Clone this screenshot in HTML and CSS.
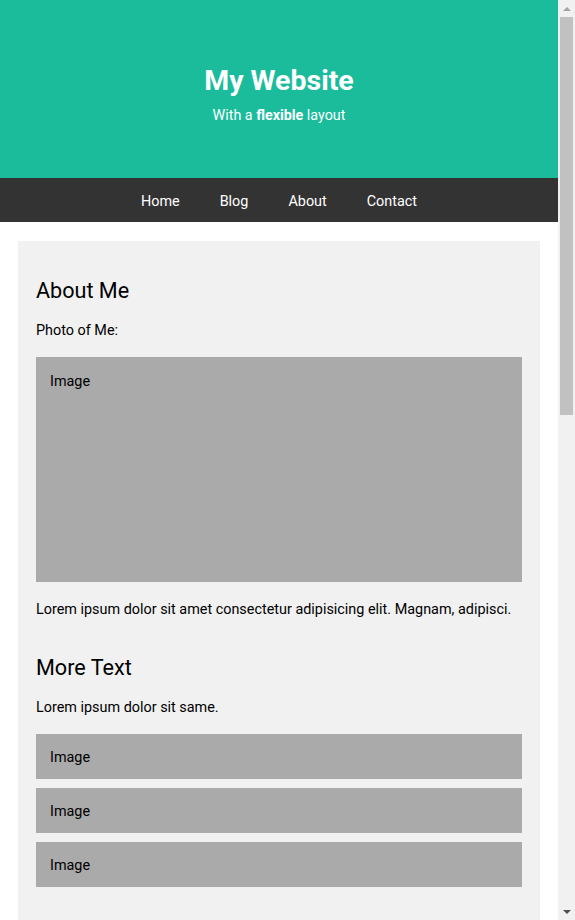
FILE: index.html
```html
<!DOCTYPE html>
<html lang="en">
<head>
<meta charset="utf-8">
<title>My Website</title>
<link rel="stylesheet" href="styles.css">
</head>
<body>
<div class="site">
  <header class="header">
    <h1 class="title">My Website</h1>
    <p class="subtitle">With a <b>flexible</b> layout</p>
  </header>
  <nav class="navbar">
    <a href="#">Home</a>
    <a href="#">Blog</a>
    <a href="#">About</a>
    <a href="#">Contact</a>
  </nav>
  <main class="page">
    <section class="card">
      <h2>About Me</h2>
      <p>Photo of Me:</p>
      <div class="fakeimg big">Image</div>
      <p>Lorem ipsum dolor sit amet consectetur adipisicing elit. Magnam, adipisci.</p>
      <h2 class="more">More Text</h2>
      <p>Lorem ipsum dolor sit same.</p>
      <div class="fakeimg">Image</div>
      <div class="fakeimg">Image</div>
      <div class="fakeimg">Image</div>
    </section>
  </main>
</div>
<div class="scrollbar" aria-hidden="true">
  <div class="sb-btn"><span class="arrow up"></span></div>
  <div class="sb-track"><div class="sb-thumb"></div></div>
  <div class="sb-btn"><span class="arrow down"></span></div>
</div>
</body>
</html>
```

FILE: styles.css
```css
* { box-sizing: border-box; }

html, body {
  margin: 0;
  height: 100%;
  overflow: hidden;
}

body {
  font-family: Roboto, "Liberation Sans", sans-serif;
  font-size: 14.4px;
  color: #000;
  background: #fff;
}

.site {
  margin-right: 17px;
}

.header {
  background: #1abc9c;
  color: #fff;
  text-align: center;
  height: 178px;
  padding-top: 63px;
}

.title {
  margin: 0;
  font-size: 28.5px;
  font-weight: 700;
  line-height: 36px;
}

.subtitle {
  margin: 8px 0 0;
  font-size: 14.3px;
  line-height: 17px;
}

.navbar {
  background: #333;
  display: flex;
  justify-content: center;
  align-items: center;
  height: 44px;
  padding-top: 3px;
}

.navbar a {
  color: #fff;
  text-decoration: none;
  padding: 0 20px;
  font-size: 14.4px;
  line-height: 17px;
}

.page {
  padding: 19px 18px 18px;
}

.card {
  background: #f1f1f1;
  padding: 19px 18px 60px;
}

.card h2 {
  font-size: 21.6px;
  font-weight: 400;
  margin: 18px 0 18px;
  line-height: 26px;
}

.card h2.more {
  margin-top: 37px;
}

.card p {
  margin: 0 0 18px;
  line-height: 17px;
}

.fakeimg {
  background: #aaa;
  padding: 15px 14px 14px;
  height: 45px;
  line-height: 17px;
  margin-bottom: 9px;
}

.fakeimg.big {
  height: 225px;
  padding-top: 16px;
  margin-bottom: 19px;
}

/* simulated browser scrollbar */
.scrollbar {
  position: fixed;
  top: 0;
  right: 0;
  width: 17px;
  height: 100%;
  background: #f1f1f1;
  display: flex;
  flex-direction: column;
}

.sb-btn {
  height: 17px;
  display: flex;
  align-items: center;
  justify-content: center;
}

.arrow {
  width: 0;
  height: 0;
  border-left: 4px solid transparent;
  border-right: 4px solid transparent;
}

.arrow.up {
  border-bottom: 4px solid #a3a3a3;
}

.arrow.down {
  border-top: 4px solid #505050;
}

.sb-track {
  flex: 1;
  padding: 0 2px;
}

.sb-thumb {
  height: 398px;
  background: #c1c1c1;
}
```
